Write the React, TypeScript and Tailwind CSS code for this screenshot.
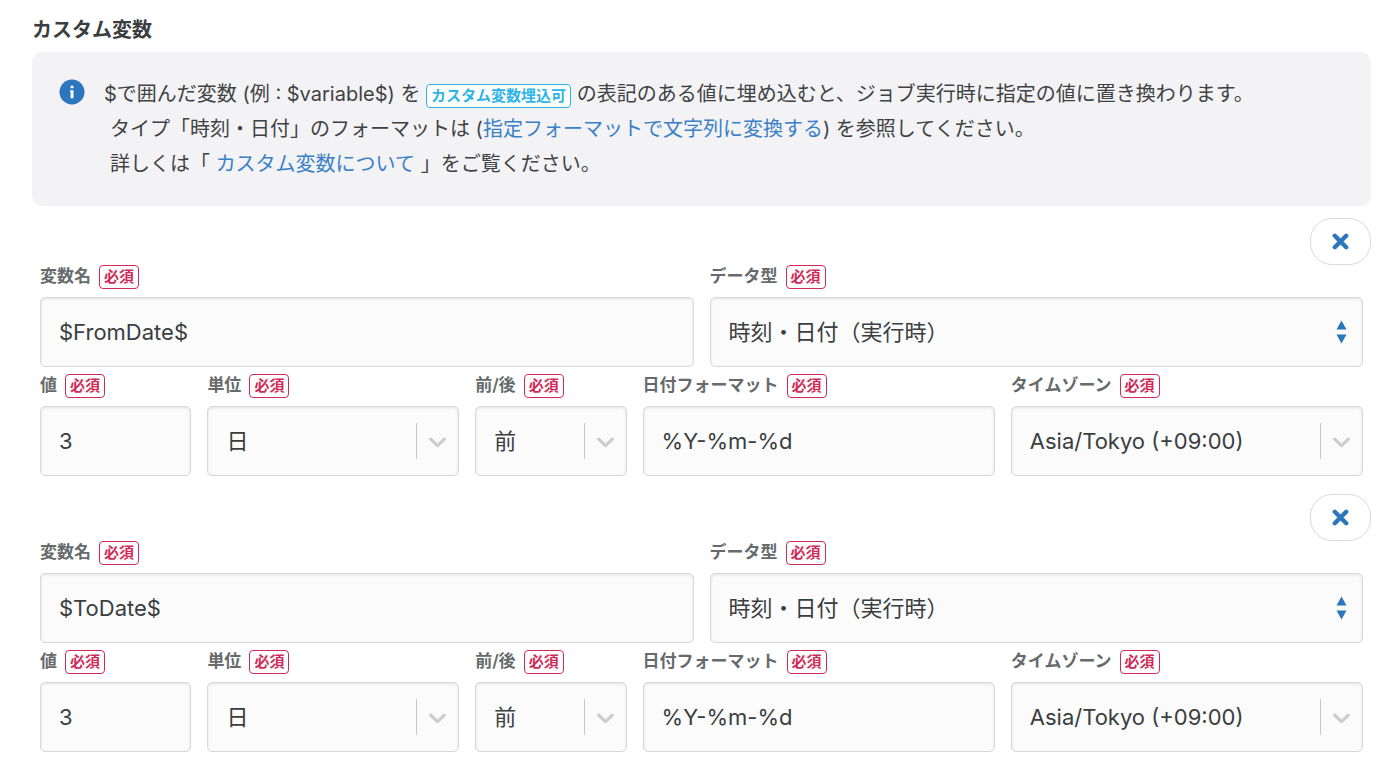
import React, { useId, useState } from "react";

type Variable = {
  id: number;
  name: string;
  type: string;
  value: string;
  unit: string;
  direction: string;
  format: string;
  timezone: string;
};

const variables: Variable[] = [
  {
    id: 1,
    name: "$FromDate$",
    type: "時刻・日付（実行時）",
    value: "3",
    unit: "日",
    direction: "前",
    format: "%Y-%m-%d",
    timezone: "Asia/Tokyo (+09:00)",
  },
  {
    id: 2,
    name: "$ToDate$",
    type: "時刻・日付（実行時）",
    value: "3",
    unit: "日",
    direction: "前",
    format: "%Y-%m-%d",
    timezone: "Asia/Tokyo (+09:00)",
  },
];

const controlClass =
  "block h-[70px] w-full appearance-none rounded-[5px] border border-[#d9d9d9] bg-[#fbfbfb] pl-[18px] text-[22px] text-[#3a3e40] shadow-[inset_0_1px_3px_rgba(0,0,0,0.1)] outline-none focus:border-[#2b76bd]";

function Field({
  label,
  children,
}: {
  label: string;
  children: (id: string) => React.ReactNode;
}) {
  const id = useId();
  return (
    <div className="min-w-0 px-2">
      <label
        htmlFor={id}
        className="mb-2 flex h-6 items-center gap-2 text-[17px] font-semibold whitespace-nowrap text-[#666a6c]"
      >
        {label}
        <span className="flex h-6 items-center rounded-[4px] border border-[#d02b58] px-1 text-[15px] text-[#d02b58]">
          必須
        </span>
      </label>
      {children(id)}
    </div>
  );
}

function TextInput({ id, initial }: { id: string; initial: string }) {
  const [value, setValue] = useState(initial);
  return (
    <input
      id={id}
      type="text"
      value={value}
      onChange={(e) => setValue(e.target.value)}
      className={controlClass}
    />
  );
}

function SelectBox({
  id,
  options,
  sorter = false,
}: {
  id: string;
  options: string[];
  sorter?: boolean;
}) {
  return (
    <div className="relative">
      <select id={id} className={controlClass}>
        {options.map((option) => (
          <option key={option}>{option}</option>
        ))}
      </select>
      {sorter ? (
        <svg
          viewBox="0 0 10 24"
          className="pointer-events-none absolute top-[23px] right-4 h-6 w-[11px] fill-[#2b76bd]"
        >
          <path d="M0 9.500L5 0.500L10 9.500ZM0 14.500H10L5 23.500Z" />
        </svg>
      ) : (
        <div className="pointer-events-none absolute inset-y-0 right-[7px] flex items-center gap-1.5">
          <span className="h-9 w-px bg-[#c8c8c8]" />
          <svg viewBox="0 0 20 20" className="size-[29px] fill-[#cccccc]">
            <path d="M4.516 7.548c0.436-0.446 1.043-0.481 1.576 0l3.908 3.747 3.908-3.747c0.533-0.481 1.141-0.446 1.574 0 0.436 0.445 0.408 1.197 0 1.615-0.406 0.418-4.695 4.502-4.695 4.502-0.217 0.223-0.502 0.335-0.787 0.335s-0.57-0.112-0.789-0.335c0 0-4.287-4.084-4.695-4.502s-0.436-1.17 0-1.615z" />
          </svg>
        </div>
      )}
    </div>
  );
}

function VariableGroup({
  variable,
  onRemove,
}: {
  variable: Variable;
  onRemove: () => void;
}) {
  return (
    <section>
      <div className="flex justify-end">
        <button
          type="button"
          aria-label="削除"
          onClick={onRemove}
          className="flex h-[47px] w-[61px] cursor-pointer items-center justify-center rounded-[22px] border border-[#dadada] bg-white hover:bg-gray-50"
        >
          <svg viewBox="0 0 17 17" className="size-[17px]">
            <path
              d="M2.800 2.800L14.200 14.200M14.200 2.800L2.800 14.200"
              stroke="#2b76bd"
              strokeWidth="4.400"
              strokeLinecap="round"
            />
          </svg>
        </button>
      </div>
      <div className="grid grid-cols-2">
        <Field label="変数名">
          {(id) => <TextInput id={id} initial={variable.name} />}
        </Field>
        <Field label="データ型">
          {(id) => <SelectBox id={id} options={[variable.type]} sorter />}
        </Field>
      </div>
      <div className="mt-[7px] grid grid-cols-[5fr_8fr_5fr_11fr_11fr]">
        <Field label="値">
          {(id) => <TextInput id={id} initial={variable.value} />}
        </Field>
        <Field label="単位">
          {(id) => <SelectBox id={id} options={[variable.unit]} />}
        </Field>
        <Field label="前/後">
          {(id) => <SelectBox id={id} options={[variable.direction]} />}
        </Field>
        <Field label="日付フォーマット">
          {(id) => <TextInput id={id} initial={variable.format} />}
        </Field>
        <Field label="タイムゾーン">
          {(id) => <SelectBox id={id} options={[variable.timezone]} />}
        </Field>
      </div>
    </section>
  );
}

function InfoPanel() {
  return (
    <div className="flex gap-[19px] rounded-[10px] bg-[#f3f3f5] px-[27px] pt-[25px] pb-6">
      <svg viewBox="0 0 26 26" className="mt-0.5 size-[26px] shrink-0">
        <circle cx="13" cy="13" r="12.500" fill="#2b76bd" />
        <path
          d="M11.600 6.800h2.900v2.500h-2.900zM11 11.200h3.500v8h-2.900v-6.800H11z"
          fill="#ffffff"
        />
      </svg>
      <div className="text-[20px] leading-[35px] text-[#3f4244]">
        <p>
          $で囲んだ変数 (例 : $variable$) を{" "}
          <span className="inline-block rounded-[4px] border border-[#2eb4e6] bg-white px-1 text-[15px] leading-[22px] font-semibold text-[#2eb4e6]">
            カスタム変数埋込可
          </span>{" "}
          の表記のある値に埋め込むと、ジョブ実行時に指定の値に置き換わります。
        </p>
        <p className="pl-1.5">
          タイプ「時刻・日付」のフォーマットは (
          <a href="#format" className="text-[#3a80c6] hover:underline">
            指定フォーマットで文字列に変換する
          </a>
          ) を参照してください。
        </p>
        <p className="pl-1.5">
          詳しくは「{" "}
          <a href="#variables" className="text-[#3a80c6] hover:underline">
            カスタム変数について
          </a>{" "}
          」をご覧ください。
        </p>
      </div>
    </div>
  );
}

export default function App() {
  const [items, setItems] = useState(variables);

  return (
    <main className="bg-white pt-[15px] pr-[29px] pb-4 pl-8 font-['Inter','Noto_Sans_CJK_JP',sans-serif]">
      <h1 className="mb-[7px] text-[20px] leading-[30px] font-bold text-[#3a3e40]">
        カスタム変数
      </h1>
      <InfoPanel />
      <div className="mt-3 flex flex-col gap-[18px]">
        {items.map((item) => (
          <VariableGroup
            key={item.id}
            variable={item}
            onRemove={() => setItems(items.filter((v) => v.id !== item.id))}
          />
        ))}
      </div>
    </main>
  );
}
